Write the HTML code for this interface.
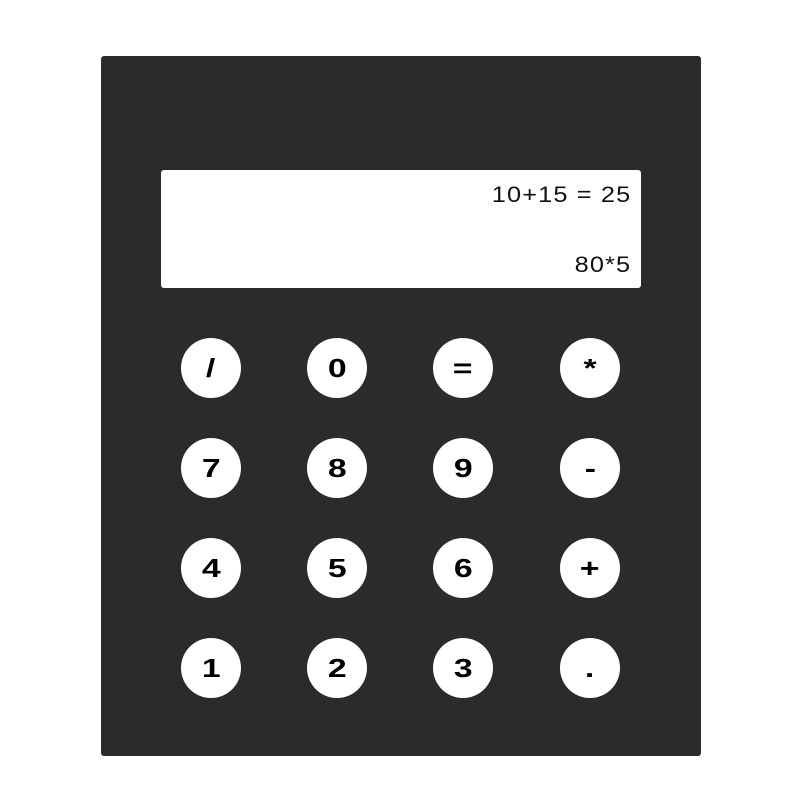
<!DOCTYPE html><html><head><style>
body{margin:0;width:800px;height:800px;background:#fff;position:relative;font-family:"Liberation Sans",sans-serif}
.calc{position:absolute;left:101px;top:56px;width:600px;height:700px;background:#2b2b2b;border-radius:3px}
.disp{position:absolute;left:161px;top:170px;width:480px;height:118px;background:#fff;border-radius:3px}
.t{position:absolute;right:10px;font-size:22px;color:#111;letter-spacing:1px;transform:scaleX(1.15);transform-origin:right}
.b{position:absolute;width:60px;height:60px;border-radius:50%;background:#fff;text-align:center;line-height:60px;font-size:26px;font-weight:bold;color:#000}
.b span{display:inline-block;transform:scaleX(1.3)}
</style></head><body>
<div class="calc"></div>
<div class="disp"><div class="t" style="top:12px">10+15 = 25</div><div class="t" style="top:82px">80*5</div></div>
<div class="b" style="left:181px;top:338px"><span>/</span></div>
<div class="b" style="left:307px;top:338px"><span>0</span></div>
<div class="b" style="left:433px;top:338px"><span>=</span></div>
<div class="b" style="left:560px;top:338px"><span>*</span></div>
<div class="b" style="left:181px;top:438px"><span>7</span></div>
<div class="b" style="left:307px;top:438px"><span>8</span></div>
<div class="b" style="left:433px;top:438px"><span>9</span></div>
<div class="b" style="left:560px;top:438px"><span>-</span></div>
<div class="b" style="left:181px;top:538px"><span>4</span></div>
<div class="b" style="left:307px;top:538px"><span>5</span></div>
<div class="b" style="left:433px;top:538px"><span>6</span></div>
<div class="b" style="left:560px;top:538px"><span>+</span></div>
<div class="b" style="left:181px;top:638px"><span>1</span></div>
<div class="b" style="left:307px;top:638px"><span>2</span></div>
<div class="b" style="left:433px;top:638px"><span>3</span></div>
<div class="b" style="left:560px;top:638px"><span>.</span></div>
</body></html>
